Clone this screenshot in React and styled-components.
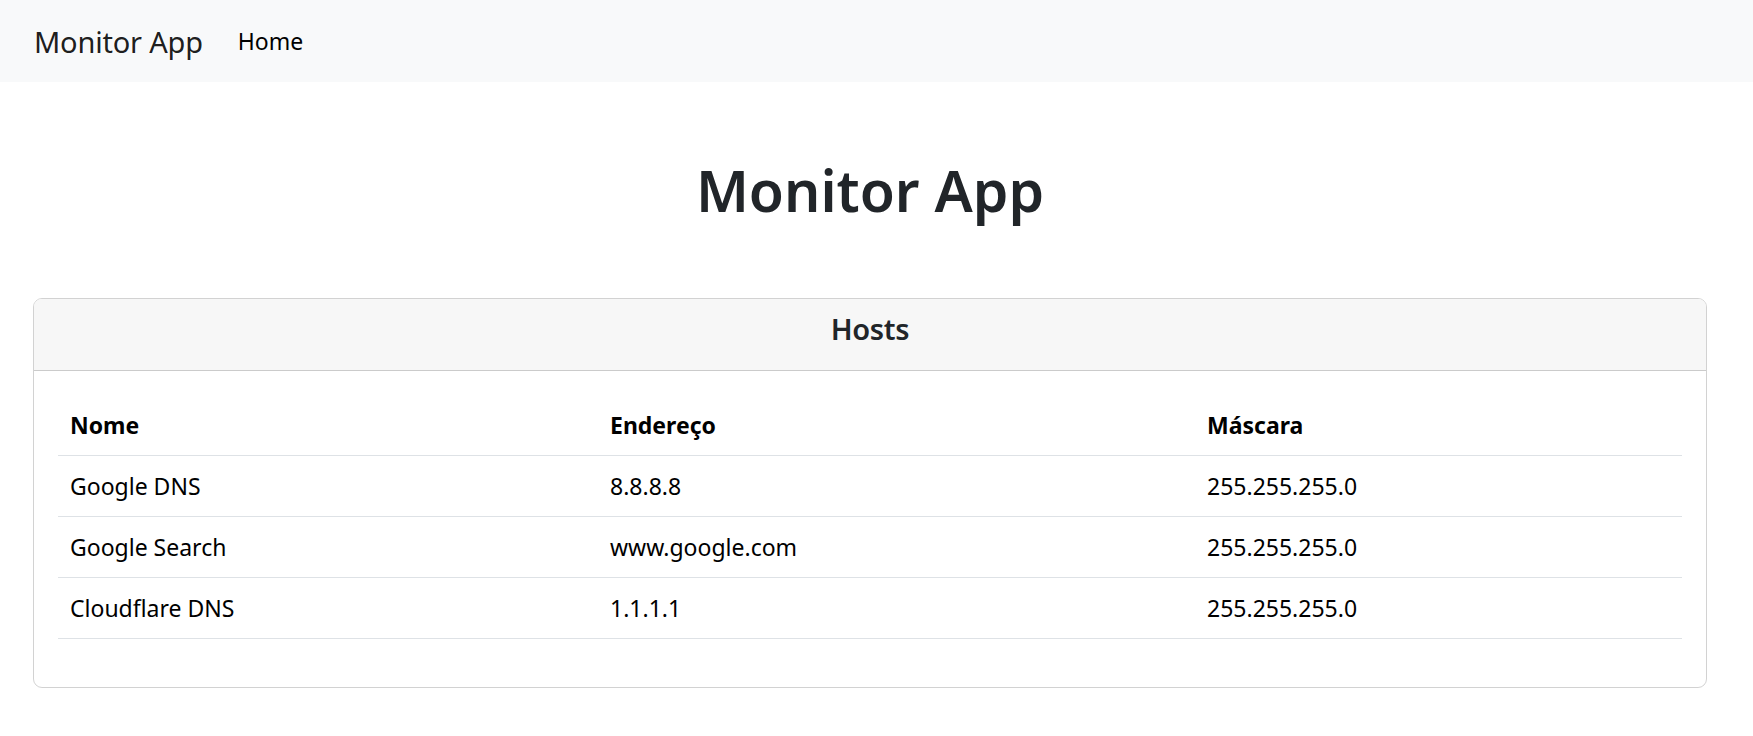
import React from 'react';
import styled, { createGlobalStyle } from 'styled-components';

const GlobalStyle = createGlobalStyle`
  * { box-sizing: border-box; }
  body {
    margin: 0;
    background: #fff;
    color: #212529;
    font-family: "Noto Sans", "Open Sans", sans-serif;
    font-size: 23px; line-height: 1.5;
  }
`;

const Navbar = styled.nav`
  display: flex; align-items: center;
  height: 82px;
  padding: 0 34px;
  background: #f8f9fa;
`;
const Brand = styled.a`
  margin-right: 35px;
  font-size: 29px; line-height: 45px;
  letter-spacing: -0.2px;
  color: rgba(0, 0, 0, 0.9);
  text-decoration: none;
`;
const NavLink = styled.a`
  font-size: 23px; line-height: 36px;
  color: #000;
  text-decoration: none;
`;

const Main = styled.main`
  padding: 0 33px;
  width: 1740px;
`;
const Title = styled.h1`
  margin: 72px 0;
  font-size: 57px; font-weight: 600; line-height: 72px;
  text-align: center;
  color: #212529;
`;

const Card = styled.section`
  border: 1px solid rgba(0, 0, 0, 0.175);
  border-radius: 9px;
  overflow: hidden;
`;
const CardHeader = styled.header`
  padding: 12px 24px;
  background: #f7f7f7;
  border-bottom: 1px solid rgba(0, 0, 0, 0.175);
  h5 {
    margin: 0 0 11px;
    font-size: 29px; font-weight: 600; line-height: 36px;
    letter-spacing: -0.3px;
    text-align: center;
    color: #212529;
  }
`;
const CardBody = styled.div`
  padding: 24px;
`;

const Table = styled.table`
  width: 100%;
  margin-bottom: 24px;
  border-collapse: collapse;
  color: #000;
  th, td {
    padding: 12px;
    border-bottom: 1px solid #dee2e6;
    text-align: left;
    font-size: 23px; line-height: 36px;
  }
  th { font-weight: 700; }
  td { font-weight: 400; }
`;

const hosts = [
  { nome: 'Google DNS', endereco: '8.8.8.8', mascara: '255.255.255.0' },
  { nome: 'Google Search', endereco: 'www.google.com', mascara: '255.255.255.0' },
  { nome: 'Cloudflare DNS', endereco: '1.1.1.1', mascara: '255.255.255.0' },
];

const App = () => (
  <>
    <GlobalStyle />
    <Navbar>
      <Brand href="#">Monitor App</Brand>
      <NavLink href="#">Home</NavLink>
    </Navbar>
    <Main>
      <Title>Monitor App</Title>
      <Card>
        <CardHeader><h5>Hosts</h5></CardHeader>
        <CardBody>
          <Table>
            <colgroup>
              <col style={{ width: 540 }} />
              <col style={{ width: 597 }} />
              <col />
            </colgroup>
            <thead>
              <tr><th>Nome</th><th>Endereço</th><th>Máscara</th></tr>
            </thead>
            <tbody>
              {hosts.map(h => (
                <tr key={h.nome}>
                  <td>{h.nome}</td>
                  <td>{h.endereco}</td>
                  <td>{h.mascara}</td>
                </tr>
              ))}
            </tbody>
          </Table>
        </CardBody>
      </Card>
    </Main>
  </>
);

export default App;
